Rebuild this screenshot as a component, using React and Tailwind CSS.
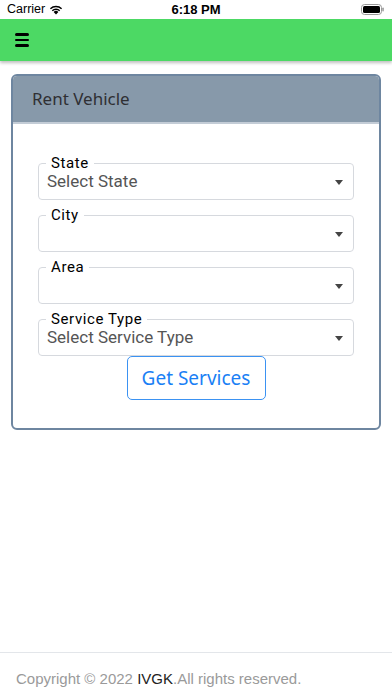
import React from 'react';

const fields = [
  { label: 'State', value: 'Select State' },
  { label: 'City', value: '' },
  { label: 'Area', value: '' },
  { label: 'Service Type', value: 'Select Service Type' },
];

const StatusBar = () => (
  <div className="h-[19px] bg-white flex items-center justify-between px-[7px] text-[12.5px] text-black relative font-['Liberation_Sans',sans-serif]">
    <div className="flex items-center gap-[4px]">
      <span>Carrier</span>
      <svg width="14" height="10" viewBox="0 0 14 10">
        <path d="M7 9.5 L4.6 7 A3.4 3.4 0 0 1 9.4 7 Z" fill="#000" />
        <path d="M2.8 5.2 A6 6 0 0 1 11.2 5.2 L10.2 6.2 A4.6 4.6 0 0 0 3.8 6.2 Z" fill="#000" />
        <path d="M0.9 3.3 A8.8 8.8 0 0 1 13.1 3.3 L12.1 4.3 A7.4 7.4 0 0 0 1.9 4.3 Z" fill="#000" />
      </svg>
    </div>
    <span className="absolute left-1/2 -translate-x-1/2 font-semibold text-[13px]">6:18 PM</span>
    <svg width="23" height="11" viewBox="0 0 23 11" className="mr-[1px]">
      <rect x="0.5" y="0.5" width="20" height="10" rx="3" fill="none" stroke="#999" />
      <rect x="2" y="2" width="17" height="7" rx="1.5" fill="#000" />
      <rect x="21.3" y="3.5" width="1.5" height="4" rx="0.7" fill="#999" />
    </svg>
  </div>
);

const SelectField = ({ label, value }) => (
  <fieldset className="border border-[#d6d9de] rounded-[4px] pl-[8px] pr-[10px] pb-[7px]">
    <legend className="-ml-[1px] px-[5px] text-[15px] leading-[15px] font-normal tracking-[0.6px] text-black">
      {label}
    </legend>
    <div className="flex items-center justify-between h-[20px] mt-[1px]">
      <span className="text-[17px] text-[#555]">{value}</span>
      <span className="w-0 h-0 border-l-[4px] border-r-[4px] border-t-[5px] border-l-transparent border-r-transparent border-t-[#444]" />
    </div>
  </fieldset>
);

export default function App() {
  return (
    <div className="min-h-[696px] flex flex-col bg-white font-['Roboto',sans-serif]">
      <StatusBar />
      <div className="h-[42px] bg-[#4cd964] flex items-center px-[15px] shadow-[0_2px_3px_rgba(0,0,0,0.25)]">
        <div className="flex flex-col gap-[3px]">
          <div className="w-[14px] h-[2.5px] bg-black rounded-sm" />
          <div className="w-[14px] h-[2.5px] bg-black rounded-sm" />
          <div className="w-[14px] h-[2.5px] bg-black rounded-sm" />
        </div>
      </div>

      <div className="px-[11px] pt-[13px]">
        <div className="border-2 border-[#6e86a0] rounded-[6px] overflow-hidden">
          <div className="h-[48px] bg-[#8799aa] border-b-2 border-[#c3ccd6] flex items-center px-[19px]">
            <span className="text-[17px] text-[#2f2f33] font-['Noto_Sans',sans-serif]">Rent Vehicle</span>
          </div>
          <div className="px-[25px] pt-[32px] pb-[28px] flex flex-col">
            <div className="flex flex-col gap-[8px]">
              {fields.map((f) => (
                <SelectField key={f.label} label={f.label} value={f.value} />
              ))}
            </div>
            <div className="flex justify-center">
              <button className="w-[139px] h-[44px] border border-[#3b92f2] rounded-[5px] text-[19px] text-[#1a7ff5] font-['Noto_Sans',sans-serif]">
                Get Services
              </button>
            </div>
          </div>
        </div>
      </div>

      <div className="mt-auto h-[44px] border-t border-[#e3e6ea] flex items-center px-[16px] pt-[10px]">
        <span className="text-[15px] text-[#9a9a9a] font-['Liberation_Sans',sans-serif]">
          Copyright © 2022 <span className="text-[#222]">IVGK</span>.All rights reserved.
        </span>
      </div>
    </div>
  );
}
